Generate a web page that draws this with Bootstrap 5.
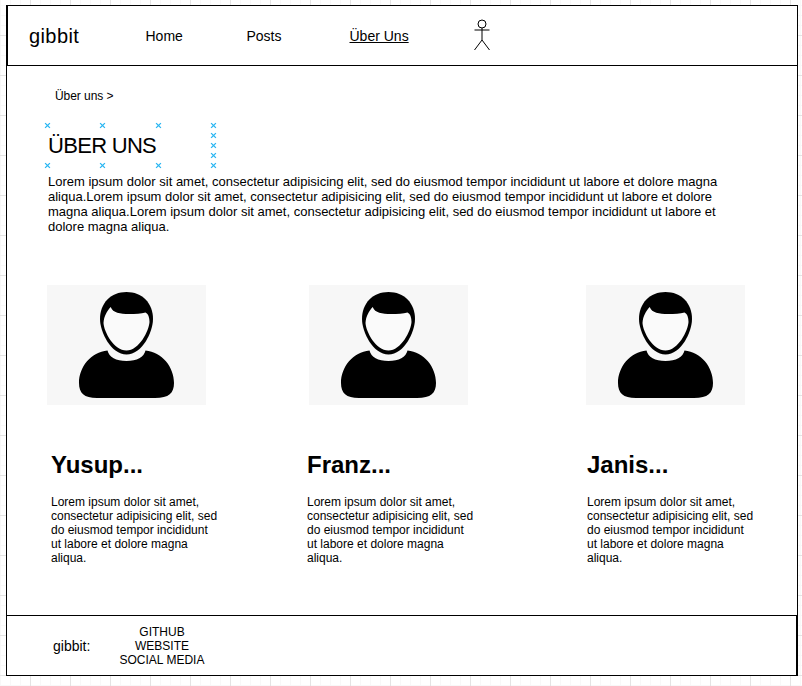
<!DOCTYPE html>
<html lang="de">
<head>
<meta charset="utf-8">
<meta name="viewport" content="width=device-width, initial-scale=1">
<title>gibbit – Über uns</title>
<link href="https://cdn.jsdelivr.net/npm/bootstrap@5.3.0/dist/css/bootstrap.min.css" rel="stylesheet">
<style>
body{font-family:"Liberation Sans",Arial,sans-serif;font-size:12px;line-height:14px;color:#000;width:802px;height:686px;overflow:hidden;padding:5px 0 0 6px;
background-color:#fff;
background-image:linear-gradient(90deg,#e4e4e4 1px,transparent 1px),linear-gradient(#e4e4e4 1px,transparent 1px),linear-gradient(90deg,#f8f8f8 1px,transparent 1px),linear-gradient(#f8f8f8 1px,transparent 1px);
background-size:40px 40px,40px 40px,10px 10px,10px 10px;background-position:30px 0,0 35px,0 0,0 5px}
.page{width:792px;height:671px;border:1px solid #000}
.topbar{height:60px;border-bottom:1px solid #000;border-left:1px solid #000;padding:0 0 0 21px}
.topbar .navbar-brand{font-size:20px;line-height:24px;width:116.500px;color:#000;letter-spacing:.4px}
.topbar .nav-link{font-size:14px;line-height:17px;color:#000;margin-top:2px}
.n1{width:101px}.n2{width:103px}.n3{width:123.500px}
.figure-icon{margin-top:-1px}
.main-area{height:549px;padding:23px 0 0 41px}
.crumb{padding-left:7px;height:36px;letter-spacing:-.05px}
.title-box{width:167px;height:40px;margin-bottom:9px}
.title-box h1{font-size:22px;line-height:42px;font-weight:400;letter-spacing:-.7px}
.anchors{left:-4px;top:-4px;width:176px;height:48px}
.intro{font-size:13px;line-height:15px;height:111px;white-space:nowrap}
.ln{display:block}
.person h2{font-size:24px;line-height:29px;font-weight:700;margin:45px 0 16px}
.portrait{width:159px;height:120px;display:block;margin-left:-4px}
.p2 .portrait{margin-left:2px}.p3 .portrait{margin-left:-1px}
.person{white-space:nowrap;margin-left:3px;width:256px}
.person.p2{margin-left:0;width:280px}.person.p3{margin-left:0;width:170px}
.foot{height:60px;border-top:1px solid #000;border-right:1px solid #000;padding-left:46px}
.foot .label{font-size:14px;line-height:17px;width:64px;margin-top:2px}
.foot ul{width:90px}
</style>
</head>
<body>
<div class="page bg-white d-flex flex-column">
 <nav class="topbar navbar navbar-expand justify-content-start flex-shrink-0">
  <a class="navbar-brand p-0 m-0" href="#">gibbit</a>
  <a class="nav-link p-0 n1" href="#">Home</a>
  <a class="nav-link p-0 n2" href="#">Posts</a>
  <a class="nav-link p-0 n3 text-decoration-underline" href="#">Über Uns</a>
  <svg class="figure-icon" width="18" height="34" viewBox="0 0 18 34" fill="none" stroke="#000" stroke-width="1"><circle cx="9" cy="6" r="4"/><path d="M9 10V22M1.500 12H16.500M9 22L1.500 32M9 22L16.500 32"/></svg>
 </nav>
 <main class="main-area flex-shrink-0">
  <div class="crumb">Über uns &gt;</div>
  <div class="title-box position-relative">
   <h1 class="m-0">ÜBER UNS</h1>
   <svg class="anchors position-absolute" viewBox="0 0 176 48" stroke="#29b6f2" stroke-width="1.3">
    <defs><path id="x" d="M-2.400 -2.400L2.400 2.400M2.400 -2.400L-2.400 2.400"/></defs>
    <use href="#x" x="3.500" y="4.500"/><use href="#x" x="58.500" y="4.500"/><use href="#x" x="114.500" y="4.500"/><use href="#x" x="169.500" y="4.500"/>
    <use href="#x" x="169.500" y="14.500"/><use href="#x" x="169.500" y="24.500"/><use href="#x" x="169.500" y="34.500"/>
    <use href="#x" x="3.500" y="44.500"/><use href="#x" x="58.500" y="44.500"/><use href="#x" x="114.500" y="44.500"/><use href="#x" x="169.500" y="44.500"/>
   </svg>
  </div>
  <p class="intro m-0"><span class="ln">Lorem ipsum dolor sit amet, consectetur adipisicing elit, sed do eiusmod tempor incididunt ut labore et dolore magna</span><span class="ln">aliqua.Lorem ipsum dolor sit amet, consectetur adipisicing elit, sed do eiusmod tempor incididunt ut labore et dolore</span><span class="ln">magna aliqua.Lorem ipsum dolor sit amet, consectetur adipisicing elit, sed do eiusmod tempor incididunt ut labore et</span><span class="ln">dolore magna aliqua.</span></p>
  <svg class="d-none"><defs><g id="user"><rect width="160" height="120" fill="#f7f7f7"/>
   <path d="M79.500 7C95 7 106 18 106 34C106 47 95 69.500 79.500 69.500C64 69.500 53 47 53 34C53 18 64 7 79.500 7Z"/>
   <path fill="#fafafa" d="M63.700 22C66 28 73 29 82 29C89 29 94 28.600 98.500 27.500C101.500 29 102.500 33 102.500 37C102 46 92 65.500 79.500 65.500C67 65.500 57 47 56.500 38C57 31 60 26 63.700 22Z"/>
   <path d="M60.500 65.500C62 72 69 76 79.500 76C90 76 97 72 98.500 65.500C115 67 127 82 127 98C127 108 122 113 108 113H50C37 113 32 108 32 98C32 82 44 67 60.500 65.500Z"/></g></defs></svg>
  <section class="d-flex">
   <article class="person"><svg class="portrait" viewBox="0 0 159 120"><use href="#user"/></svg><h2>Yusup...</h2><p class="m-0">Lorem ipsum dolor sit amet,<br>consectetur adipisicing elit, sed<br>do eiusmod tempor incididunt<br>ut labore et dolore magna<br>aliqua.</p></article>
   <article class="person p2"><svg class="portrait" viewBox="0 0 159 120"><use href="#user"/></svg><h2>Franz...</h2><p class="m-0">Lorem ipsum dolor sit amet,<br>consectetur adipisicing elit, sed<br>do eiusmod tempor incididunt<br>ut labore et dolore magna<br>aliqua.</p></article>
   <article class="person p3"><svg class="portrait" viewBox="0 0 159 120"><use href="#user"/></svg><h2>Janis...</h2><p class="m-0">Lorem ipsum dolor sit amet,<br>consectetur adipisicing elit, sed<br>do eiusmod tempor incididunt<br>ut labore et dolore magna<br>aliqua.</p></article>
  </section>
 </main>
 <footer class="foot d-flex align-items-center flex-shrink-0">
  <div class="label">gibbit:</div>
  <ul class="list-unstyled text-center m-0"><li>GITHUB</li><li>WEBSITE</li><li>SOCIAL MEDIA</li></ul>
 </footer>
</div>
<script src="https://cdn.jsdelivr.net/npm/bootstrap@5.3.0/dist/js/bootstrap.bundle.min.js"></script>
</body>
</html>
